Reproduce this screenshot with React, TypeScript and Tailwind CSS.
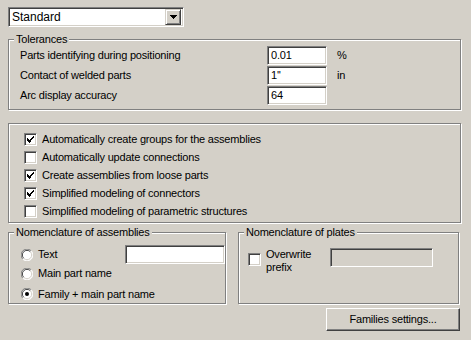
import type { ReactNode } from "react";

const sunken =
  "border border-t-[#808080] border-l-[#808080] border-r-white border-b-white shadow-[inset_1px_1px_0_#404040,inset_-1px_-1px_0_#d4d0c8]";

function Group({ title, className, children }: { title?: string; className: string; children: ReactNode }) {
  return (
    <div
      className={`relative border border-[#808080] shadow-[inset_1px_1px_0_#fff,1px_1px_0_#fff] ${className}`}
    >
      {title && (
        <span className="absolute -top-[8px] left-[5px] bg-[#d4d0c8] px-[2px] leading-[14px]">{title}</span>
      )}
      {children}
    </div>
  );
}

function Input({ value, className }: { value?: string; className: string }) {
  return (
    <div className={`bg-white ${sunken} flex items-center pl-[3px] ${className}`}>
      {value}
    </div>
  );
}

function Check({ checked }: { checked?: boolean }) {
  return (
    <div className={`w-[13px] h-[13px] bg-white ${sunken} flex items-center justify-center shrink-0`}>
      {checked && (
        <svg width="7" height="7" viewBox="0 0 7 7" shapeRendering="crispEdges">
          <path d="M0 2h1v1H0zM0 3h2v1H0zM0 4h3v1H0zM1 5h2v1H1zM2 6h1v1H2zM3 3h1v3H3zM4 2h1v2H4zM5 1h1v2H5zM6 0h1v2H6z" fill="#000" />
        </svg>
      )}
    </div>
  );
}

function Radio({ checked }: { checked?: boolean }) {
  return (
    <svg width="12" height="12" viewBox="0 0 12 12" className="shrink-0">
      <circle cx="6" cy="6" r="5.5" fill="#fff" />
      <path d="M10.2 1.8A5.5 5.5 0 0 0 1.8 10.2" stroke="#808080" strokeWidth="1" fill="none" />
      <path d="M9.3 2.7A4.4 4.4 0 0 0 2.7 9.3" stroke="#404040" strokeWidth="1" fill="none" />
      <path d="M1.8 10.2A5.5 5.5 0 0 0 10.2 1.8" stroke="#fff" strokeWidth="1" fill="none" />
      <path d="M2.7 9.3A4.4 4.4 0 0 0 9.3 2.7" stroke="#d4d0c8" strokeWidth="1" fill="none" />
      {checked && <circle cx="6" cy="6" r="2" fill="#000" />}
    </svg>
  );
}

const options = [
  { label: "Automatically create groups for the assemblies", checked: true },
  { label: "Automatically update connections", checked: false },
  { label: "Create assemblies from loose parts", checked: true },
  { label: "Simplified modeling of connectors", checked: true },
  { label: "Simplified modeling of parametric structures", checked: false },
];

const tolerances = [
  { label: "Parts identifying during positioning", value: "0.01", unit: "%" },
  { label: "Contact of welded parts", value: "1''", unit: "in" },
  { label: "Arc display accuracy", value: "64", unit: "" },
];

export default function App() {
  return (
    <div
      className="w-[471px] h-[340px] bg-[#d4d0c8] text-black text-[11px] tracking-[-0.2px] leading-none flex flex-col pl-[8px] pt-[7px]"
      style={{ fontFamily: '"Liberation Sans", Arial, sans-serif' }}
    >
      {/* combo */}
      <div className={`w-[176px] h-[20px] bg-white ${sunken} flex items-center justify-between pl-[3px] pr-[2px]`}>
        <span className="text-[12px] tracking-normal">Standard</span>
        <div className="w-[16px] h-[16px] bg-[#d4d0c8] border border-t-[#d4d0c8] border-l-[#d4d0c8] border-r-[#404040] border-b-[#404040] shadow-[inset_1px_1px_0_#fff,inset_-1px_-1px_0_#808080] flex items-center justify-center">
          <svg width="7" height="4" viewBox="0 0 7 4" shapeRendering="crispEdges">
            <path d="M0 0h7v1H0zM1 1h5v1H1zM2 2h3v1H2zM3 3h1v1H3z" fill="#000" />
          </svg>
        </div>
      </div>

      <Group title="Tolerances" className="mt-[12px] w-[453px] h-[71px] pt-[6px]">
        <div className="flex flex-col gap-[1px]">
          {tolerances.map((t) => (
            <div key={t.label} className="flex items-center h-[19px]">
              <span className="w-[258px] pl-[11px]">{t.label}</span>
              <Input value={t.value} className="w-[60px] h-[19px]" />
              <span className="pl-[10px]">{t.unit}</span>
            </div>
          ))}
        </div>
      </Group>

      <Group className="mt-[13px] w-[453px] h-[100px] pt-[6px]">
        <div className="flex flex-col">
          {options.map((o) => (
            <div key={o.label} className="flex items-center h-[18px] pl-[15px] gap-[5px]">
              <Check checked={o.checked} />
              <span>{o.label}</span>
            </div>
          ))}
        </div>
      </Group>

      <div className="mt-[9px] flex gap-[12px]">
        <Group title="Nomenclature of assemblies" className="w-[218px] h-[72px] pt-[12px]">
          <div className="flex flex-col">
            <div className="flex items-center h-[19px] pl-[12px]">
              <Radio />
              <span className="pl-[5px] w-[92px]">Text</span>
              <Input className="w-[101px] h-[19px]" />
            </div>
            <div className="flex items-center h-[19px] pl-[12px]">
              <Radio />
              <span className="pl-[5px]">Main part name</span>
            </div>
            <div className="flex items-center h-[20px] pl-[12px] mt-[1px]">
              <Radio checked />
              <span className="pl-[5px]">Family + main part name</span>
            </div>
          </div>
        </Group>

        <Group title="Nomenclature of plates" className="w-[221px] h-[72px] pt-[15px]">
          <div className="flex items-start pl-[9px]">
            <div className="mt-[5px]">
              <Check />
            </div>
            <div className="pl-[5px] w-[69px] leading-[13px]">
              Overwrite
              <br />
              prefix
            </div>
            <div className={`w-[103px] h-[19px] bg-[#d4d0c8] ${sunken}`} />
          </div>
        </Group>
      </div>

      <div className="mt-[4px] flex justify-end pr-[11px]">
        <button className="w-[134px] h-[23px] bg-[#d4d0c8] border border-t-white border-l-white border-r-[#404040] border-b-[#404040] shadow-[inset_-1px_-1px_0_#808080] flex items-center justify-center">
          Families settings...
        </button>
      </div>
    </div>
  );
}
